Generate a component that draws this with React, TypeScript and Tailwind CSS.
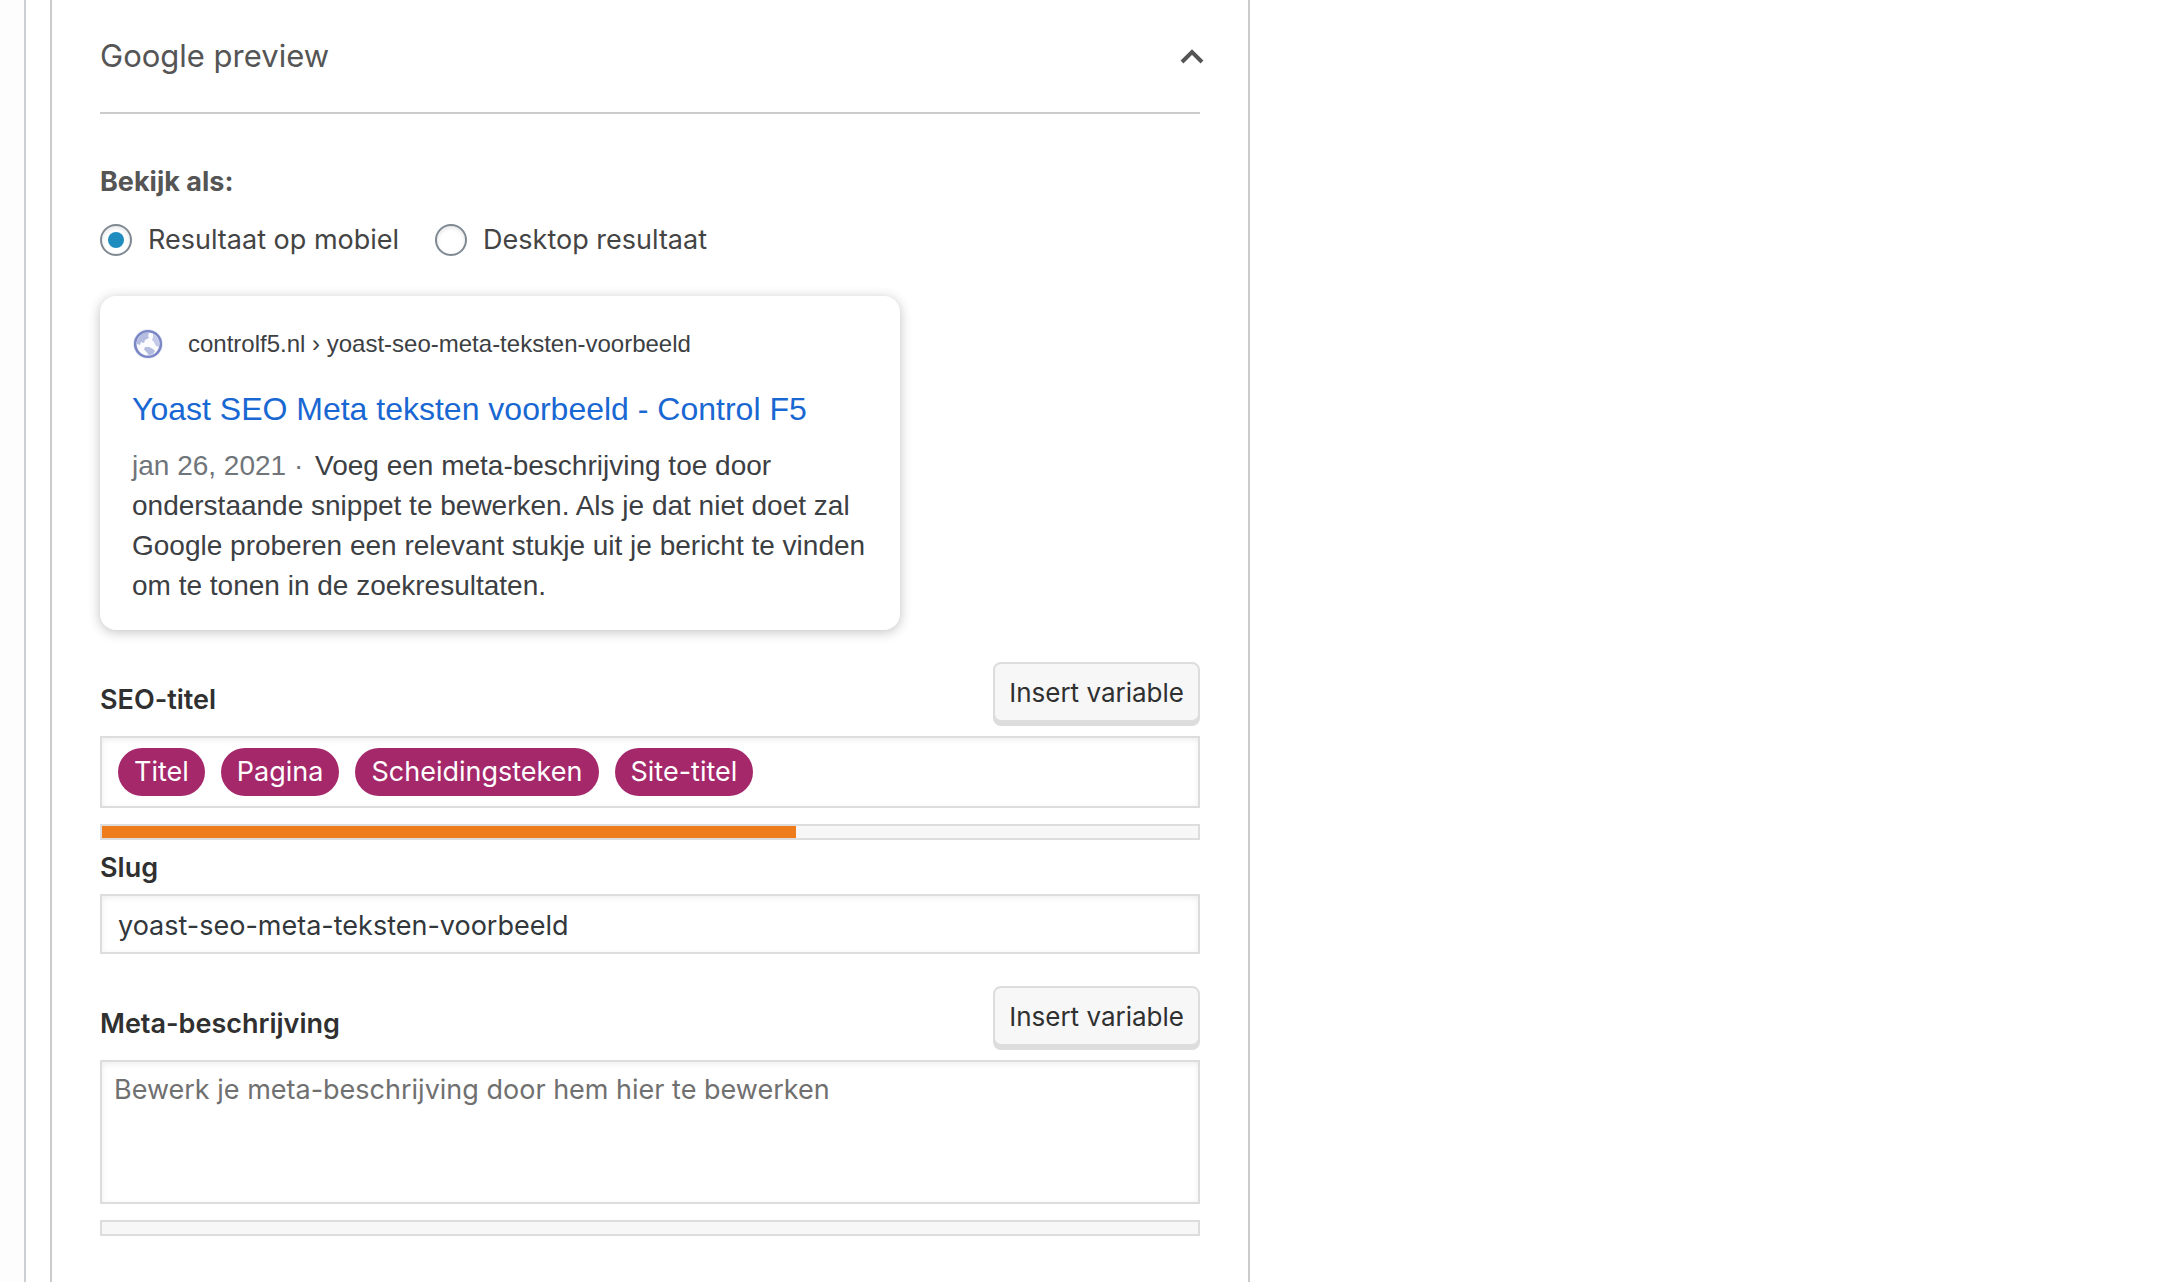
import { useState } from 'react'

const titleVariables = ['Titel', 'Pagina', 'Scheidingsteken', 'Site-titel']

const fieldClass =
  'block w-full border-2 border-[#ddd] bg-white shadow-[inset_0_2px_6px_rgba(0,0,0,0.07)] outline-none'

function GlobeIcon() {
  return (
    <svg viewBox="0 0 32 32" className="h-8 w-8 shrink-0" aria-hidden="true">
      <circle cx="16" cy="16" r="15" fill="#d5d9ee" opacity="0.5" />
      <circle cx="16" cy="16" r="12.8" fill="#fbfbfe" stroke="#7b86c6" strokeWidth="2.6" />
      <path
        d="M5 13C6 9 9 6 13 4.5L17 5l-1 3 1 2-4 2-1 3-3-1-1 3-3-1z"
        fill="#b4bddf"
      />
      <path d="M21 6l4 3 2.500 5-.5 5-3-1-2-4-2-2 1-3z" fill="#c3c9e6" />
      <path d="M13 19l4 0 4 2 2 2-2 3-4 1.500-2-3-3-3z" fill="#b4bddf" />
    </svg>
  )
}

function InsertVariableButton() {
  return (
    <button
      type="button"
      className="mb-1 h-[60px] cursor-pointer rounded-lg border-2 border-[#ddd] bg-[#f7f7f7] px-[14px] pt-px text-[26px] leading-8 text-[#303030] shadow-[0_4px_0_#ddd]"
    >
      Insert variable
    </button>
  )
}

function LengthBar({ value, label }: { value: number; label: string }) {
  return (
    <progress
      value={value}
      max={600}
      aria-label={label}
      className="mt-4 block h-4 w-full appearance-none border-2 border-[#ddd] bg-[#f7f7f7] [&::-webkit-progress-bar]:bg-[#f7f7f7] [&::-webkit-progress-value]:bg-[#ee7c1b]"
    />
  )
}

type RadioProps = {
  value: string
  label: string
  checked: boolean
  onChange: (value: string) => void
}

function ModeRadio({ value, label, checked, onChange }: RadioProps) {
  return (
    <label className="flex items-center gap-4 text-[27px] leading-8 text-[#444]">
      <input
        type="radio"
        name="preview-mode"
        value={value}
        checked={checked}
        onChange={() => onChange(value)}
        className="grid h-8 w-8 appearance-none place-items-center rounded-full border-2 border-[#7e8993] bg-white shadow-[inset_0_2px_4px_rgba(0,0,0,0.1)] checked:before:h-4 checked:before:w-4 checked:before:rounded-full checked:before:bg-[#1e8cbe] checked:before:content-['']"
      />
      {label}
    </label>
  )
}

export default function App() {
  const [open, setOpen] = useState(true)
  const [mode, setMode] = useState('mobile')
  const [slug, setSlug] = useState('yoast-seo-meta-teksten-voorbeeld')
  const [description, setDescription] = useState('')

  return (
    <div className="flex min-h-screen bg-[#fdfdfd] pl-6 font-['Inter',sans-serif]">
      <div className="flex min-w-0 flex-1 border-l-2 border-[#ccd0d4] bg-white pl-6">
        <section className="w-full max-w-[1200px] border-x-2 border-[#ccc] px-12">
          <h2>
            <button
              type="button"
              aria-expanded={open}
              onClick={() => setOpen(!open)}
              className="flex h-[114px] w-full cursor-pointer items-center justify-between border-b-2 border-[#ccc] pt-px text-[31px] text-[#555]"
            >
              Google preview
              <svg viewBox="0 0 24 16" className="-mr-1 h-4 w-6" fill="none" aria-hidden="true">
                <path d={open ? 'M2 13 12 3l10 10' : 'M2 2l10 10L22 2'} stroke="#555" strokeWidth="4" />
              </svg>
            </button>
          </h2>

          {open && (
            <div className="pt-[52px]">
              <fieldset>
                <legend className="text-[27px] leading-8 font-bold text-[#555]">Bekijk als:</legend>
                <div className="flex gap-9 pt-[26px]">
                  <ModeRadio
                    value="mobile"
                    label="Resultaat op mobiel"
                    checked={mode === 'mobile'}
                    onChange={setMode}
                  />
                  <ModeRadio
                    value="desktop"
                    label="Desktop resultaat"
                    checked={mode === 'desktop'}
                    onChange={setMode}
                  />
                </div>
              </fieldset>

              <article className="mt-10 max-w-[800px] rounded-2xl bg-white px-8 pt-8 pb-6 font-['Liberation_Sans',Arial,sans-serif] shadow-[0_2px_12px_rgba(32,33,36,0.28)]">
                <div className="flex items-center gap-6 text-2xl text-[#3c4043]">
                  <GlobeIcon />
                  <span>controlf5.nl › yoast-seo-meta-teksten-voorbeeld</span>
                </div>
                <a href="#preview" className="mt-7 block text-[32px] leading-[42px] text-[#1967d2]">
                  Yoast SEO Meta teksten voorbeeld - Control F5
                </a>
                <p className="mt-4 text-[28px] leading-10 text-[#3c4043]">
                  <span className="mr-1 text-[#70757a]">jan 26, 2021 · </span>
                  Voeg een meta-beschrijving toe door onderstaande snippet te bewerken. Als je dat niet doet zal
                  Google proberen een relevant stukje uit je bericht te vinden om te tonen in de zoekresultaten.
                </p>
              </article>

              <div className="mt-8 flex items-end justify-between">
                <span id="seo-title-label" className="pb-[10px] text-[27px] leading-8 font-semibold text-[#303030]">
                  SEO-titel
                </span>
                <InsertVariableButton />
              </div>
              <div
                role="textbox"
                tabIndex={0}
                aria-labelledby="seo-title-label"
                className={`${fieldClass} mt-[10px] px-4 py-[10px]`}
              >
                <div className="flex flex-wrap gap-4">
                  {titleVariables.map((name) => (
                    <span key={name} className="rounded-full bg-[#a4286a] px-4 py-2 text-[27px] leading-8 text-white">
                      {name}
                    </span>
                  ))}
                </div>
              </div>
              <LengthBar value={380} label="Lengte SEO-titel" />

              <label htmlFor="slug" className="mt-3 block text-[27px] leading-8 font-semibold text-[#303030]">
                Slug
              </label>
              <input
                id="slug"
                type="text"
                value={slug}
                onChange={(e) => setSlug(e.target.value)}
                className={`${fieldClass} mt-[10px] h-[60px] px-4 pt-[2px] text-[27px] text-[#32373c]`}
              />

              <div className="mt-8 flex items-end justify-between">
                <label htmlFor="meta" className="pb-[10px] text-[27px] leading-8 font-semibold text-[#303030]">
                  Meta-beschrijving
                </label>
                <InsertVariableButton />
              </div>
              <textarea
                id="meta"
                value={description}
                onChange={(e) => setDescription(e.target.value)}
                placeholder="Bewerk je meta-beschrijving door hem hier te bewerken"
                className={`${fieldClass} mt-[10px] h-36 resize-none px-3 py-2 text-[27px] leading-10 text-[#32373c] placeholder:text-[#707070]`}
              />
              <LengthBar value={0} label="Lengte meta-beschrijving" />
            </div>
          )}
        </section>
      </div>
    </div>
  )
}
